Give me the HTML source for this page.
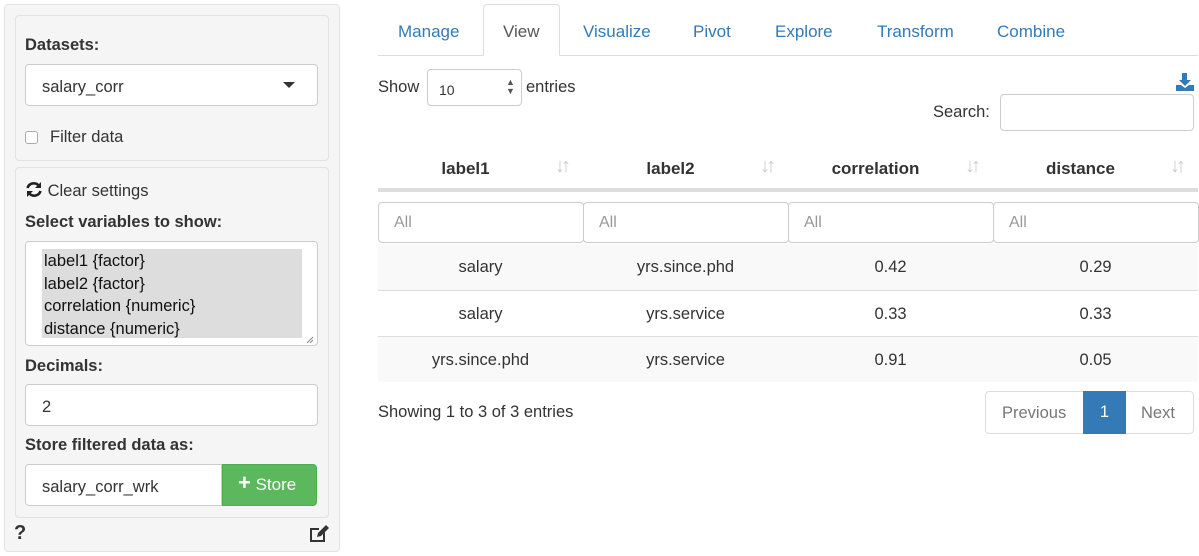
<!DOCTYPE html>
<html><head><style>
*{box-sizing:border-box;margin:0;padding:0}
body{width:1199px;height:556px;background:#fff;font-family:"Liberation Sans",Arial,sans-serif;font-size:16.5px;color:#333;position:relative;overflow:hidden}
.a{position:absolute}
.b{font-weight:bold}
.inp{position:absolute;background:#fff;border:1px solid #ccc;border-radius:4px}
.tab{position:absolute;top:22px;color:#337ab7;font-size:17px}
.th{position:absolute;top:159px;font-weight:bold;font-size:17px;text-align:center}
.srt{position:absolute;top:155px;color:#ccc;font-size:20px;letter-spacing:-4px;font-weight:bold}
.f{position:absolute;top:202px;height:41px;width:206px;border:1px solid #ccc;border-radius:4px;color:#999;padding:11px 15px;font-size:16px}
.row{position:absolute;left:378px;width:820px;height:46px;border-top:1px solid #ddd}
.row span{position:absolute;top:14px;width:205px;text-align:center;font-size:16.5px}
</style></head><body>
<div class="a" style="left:4px;top:4px;width:336px;height:548px;background:#f5f5f5;border:1px solid #e3e3e3;border-radius:4px"></div>
<div class="a" style="left:15px;top:15px;width:314px;height:146px;background:#f5f5f5;border:1px solid #e3e3e3;border-radius:4px"></div>
<div class="a" style="left:15px;top:167px;width:314px;height:351px;background:#f5f5f5;border:1px solid #e3e3e3;border-radius:4px"></div>
<div class="a b" style="left:25px;top:36px">Datasets:</div>
<div class="inp" style="left:25px;top:64px;width:293px;height:42px"><span class="a" style="left:16px;top:13px">salary_corr</span><span class="a" style="left:257px;top:17px;border-left:6px solid transparent;border-right:6px solid transparent;border-top:6px solid #333"></span></div>
<div class="a" style="left:25px;top:131px;width:13px;height:13px;border:1px solid #aaa;border-radius:3px;background:#fff"></div>
<div class="a" style="left:50px;top:128px">Filter data</div>
<div class="a" style="left:25px;top:181px"><svg width="18" height="17" viewBox="0 0 18 17" style="vertical-align:-2px"><path d="M14 5A6.5 6.5 0 0 0 2.5 7" stroke="#222" stroke-width="2.6" fill="none"/><path d="M16 1v6h-6z" fill="#222"/><path d="M4 12A6.5 6.5 0 0 0 15.5 10" stroke="#222" stroke-width="2.6" fill="none"/><path d="M2 16v-6h6z" fill="#222"/></svg> Clear settings</div>
<div class="a b" style="left:25px;top:213px">Select variables to show:</div>
<div class="inp" style="left:25px;top:241px;width:293px;height:105px"></div>
<div class="a" style="left:42px;top:249px;width:260px;height:89px;background:#ddd"></div>
<div class="a" style="left:44px;top:250px;line-height:22.5px;color:#111">label1 {factor}<br>label2 {factor}<br>correlation {numeric}<br>distance {numeric}</div>
<svg class="a" style="left:306px;top:336px" width="8" height="8"><path d="M1 7L7 1M4 7L7 4" stroke="#888"/></svg>
<div class="a b" style="left:25px;top:357px">Decimals:</div>
<div class="inp" style="left:25px;top:384px;width:293px;height:42px"><span class="a" style="left:16px;top:13px">2</span></div>
<div class="a b" style="left:25px;top:436px">Store filtered data as:</div>
<div class="inp" style="left:25px;top:464px;width:197px;height:42px;border-radius:4px 0 0 4px"><span class="a" style="left:16px;top:13px">salary_corr_wrk</span></div>
<div class="a" style="left:222px;top:464px;width:95px;height:42px;background:#5cb85c;border:1px solid #4cae4c;border-radius:0 4px 4px 0;color:#fff;font-size:17px;padding:10px 0 0 15px"><b style="font-size:22px;line-height:16px">+</b> Store</div>
<div class="a b" style="left:14px;top:522px;font-size:20px">?</div>
<svg class="a" style="left:308px;top:524px" width="22" height="19" viewBox="0 0 22 19"><path d="M2 4h9v2H4v10h11v-6l2-2v10H2z" fill="#333"/><path d="M9 13l1-4 8-8 3 3-8 8z" fill="#333"/></svg>
<div class="a" style="left:378px;top:55px;width:820px;border-top:1px solid #ddd"></div>
<div class="a" style="left:483px;top:4px;width:77px;height:52px;border:1px solid #ddd;border-bottom-color:#fff;border-radius:4px 4px 0 0;background:#fff"></div>
<div class="tab" style="left:398px">Manage</div>
<div class="tab" style="left:503px;color:#555">View</div>
<div class="tab" style="left:583px">Visualize</div>
<div class="tab" style="left:693px">Pivot</div>
<div class="tab" style="left:775px">Explore</div>
<div class="tab" style="left:877px">Transform</div>
<div class="tab" style="left:997px">Combine</div>
<div class="a" style="left:378px;top:78px">Show</div>
<div class="inp" style="left:427px;top:69px;width:95px;height:37px;font-size:14px"><span class="a" style="left:11px;top:12px">10</span><span class="a" style="left:78px;top:8px;font-size:9px;line-height:9px;color:#555">▲<br>▼</span></div>
<div class="a" style="left:526px;top:78px">entries</div>
<svg class="a" style="left:1175px;top:72px" width="20" height="20" viewBox="0 0 20 20"><path d="M7 1h5v7h4l-6 6-6-6h3z" fill="#337ab7"/><path d="M1 13h5l4 3 4-3h5v6H1z" fill="#337ab7"/></svg>
<div class="a" style="left:933px;top:103px">Search:</div>
<div class="inp" style="left:1000px;top:94px;width:194px;height:37px"></div>
<div class="th" style="left:378px;width:175px">label1</div>
<div class="th" style="left:583px;width:175px">label2</div>
<div class="th" style="left:788px;width:175px">correlation</div>
<div class="th" style="left:993px;width:175px">distance</div>
<div class="srt" style="left:555px">↓↑</div><div class="srt" style="left:760px">↓↑</div><div class="srt" style="left:965px">↓↑</div><div class="srt" style="left:1170px">↓↑</div>
<div class="a" style="left:378px;top:188px;width:820px;height:4px;background:#ddd"></div>
<div class="f" style="left:378px">All</div><div class="f" style="left:583px">All</div><div class="f" style="left:788px">All</div><div class="f" style="left:993px">All</div>
<div class="row" style="top:244px;background:#f9f9f9;border-top:none"><span style="left:0">salary</span><span style="left:205px">yrs.since.phd</span><span style="left:410px">0.42</span><span style="left:615px">0.29</span></div>
<div class="row" style="top:290px"><span style="left:0">salary</span><span style="left:205px">yrs.service</span><span style="left:410px">0.33</span><span style="left:615px">0.33</span></div>
<div class="row" style="top:336px;background:#f9f9f9"><span style="left:0">yrs.since.phd</span><span style="left:205px">yrs.service</span><span style="left:410px">0.91</span><span style="left:615px">0.05</span></div>
<div class="a" style="left:378px;top:403px">Showing 1 to 3 of 3 entries</div>
<div class="a" style="left:985px;top:391px;width:209px;height:43px;border:1px solid #ddd;border-radius:4px"></div>
<div class="a" style="left:1002px;top:404px;color:#777">Previous</div>
<div class="a" style="left:1083px;top:391px;width:43px;height:43px;background:#337ab7;color:#fff;text-align:center;padding-top:12px">1</div>
<div class="a" style="left:1141px;top:404px;color:#777">Next</div>
</body></html>
